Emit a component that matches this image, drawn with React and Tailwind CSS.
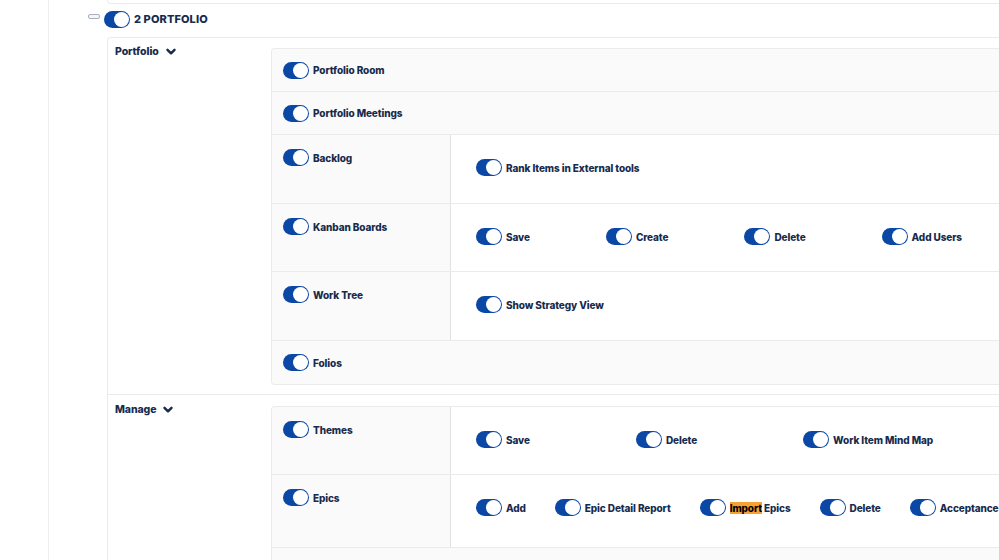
import React from "react";

function Toggle() {
  return (
    <span className="relative inline-block w-[26px] h-[17px] rounded-full bg-[#0b47a5] shrink-0">
      <span className="absolute right-[1px] top-[1px] w-[15px] h-[15px] rounded-full bg-white" />
    </span>
  );
}

function Item({ label, highlight }) {
  return (
    <div className="flex items-center gap-[4px] whitespace-nowrap shrink-0">
      <Toggle />
      <span className="text-[10px] font-[800] tracking-[-0.1px] text-[#172b4d] leading-none">
        {highlight ? (
          <>
            <span className="bg-[#f7a133] text-black">{highlight}</span>
            {label}
          </>
        ) : (
          label
        )}
      </span>
    </div>
  );
}

function SingleRow({ label, last }) {
  return (
    <div className={`h-[43px] shrink-0 bg-[#fafafa] flex items-center pl-[11px] ${last ? "" : "border-b border-[#ebebeb]"}`}>
      <Item label={label} />
    </div>
  );
}

function DoubleRow({ label, items, gap, h = "h-[69px]" }) {
  return (
    <div className={`${h} shrink-0 flex border-b border-[#ebebeb]`}>
      <div className="w-[179px] shrink-0 bg-[#fafafa] border-r border-[#e2e2e2] pl-[11px] pt-[14px]">
        <Item label={label} />
      </div>
      <div className={`flex-1 bg-white flex items-start pt-[24px] pl-[25px] ${gap} overflow-hidden`}>
        {items.map((it, i) => (
          <Item key={i} label={it.label} highlight={it.highlight} />
        ))}
      </div>
    </div>
  );
}

function Chevron() {
  return (
    <svg width="10" height="8" viewBox="0 0 10 8" className="ml-[7px]">
      <path d="M1.5 1.8 L5 5.3 L8.5 1.8" fill="none" stroke="#172b4d" strokeWidth="2.4" strokeLinecap="round" strokeLinejoin="round" />
    </svg>
  );
}

function GroupLabel({ text }) {
  return (
    <div className="w-[163px] shrink-0 pl-[7px] flex items-center h-[8px] self-start">
      <span className="text-[10.5px] font-[800] tracking-[-0.1px] text-[#172b4d]">{text}</span>
      <Chevron />
    </div>
  );
}

export default function App() {
  return (
    <div
      className="w-[999px] h-[560px] overflow-hidden bg-white flex"
      style={{ fontFamily: "Inter, 'Noto Sans', sans-serif" }}
    >
      <div className="w-[49px] shrink-0 border-r border-[#efefef]" />
      <div className="flex-1 flex flex-col min-w-0">
        <div className="ml-[58px] h-[4px] shrink-0 border-l border-b border-[#ebebeb] rounded-bl-[4px]" />
        <div className="h-[33px] shrink-0 flex items-center pl-[39px] pb-[3px]">
          <span className="w-[12px] h-[5px] rounded-[2px] border border-[#a9b0bb] bg-[#f4f5f7] mr-[4px] -mt-[5px]" />
          <Toggle />
          <span className="ml-[4px] text-[11px] font-[800] text-[#172b4d] tracking-[0.1px]">2 PORTFOLIO</span>
        </div>
        <div className="ml-[58px] shrink-0 border-l border-t border-[#ebebeb] rounded-tl-[4px] flex flex-col">
          <div className="flex shrink-0 border-b border-[#ebebeb] pt-[10px] pb-[9px]">
            <GroupLabel text="Portfolio" />
            <div className="flex-1 border-l border-t border-b border-[#ebebeb] rounded-l-[4px] overflow-hidden">
              <SingleRow label="Portfolio Room" />
              <SingleRow label="Portfolio Meetings" />
              <DoubleRow label="Backlog" items={[{ label: "Rank Items in External tools" }]} gap="gap-[76px]" />
              <DoubleRow
                label="Kanban Boards"
                h="h-[68px]"
                items={[{ label: "Save" }, { label: "Create" }, { label: "Delete" }, { label: "Add Users" }]}
                gap="gap-[76px]"
              />
              <DoubleRow label="Work Tree" items={[{ label: "Show Strategy View" }]} gap="gap-[76px]" />
              <SingleRow label="Folios" last />
            </div>
          </div>
          <div className="flex shrink-0 pt-[11px]">
            <GroupLabel text="Manage" />
            <div className="flex-1 border-l border-t border-[#ebebeb] rounded-tl-[4px] overflow-hidden">
              <DoubleRow
                label="Themes"
                h="h-[68px]"
                items={[{ label: "Save" }, { label: "Delete" }, { label: "Work Item Mind Map" }]}
                gap="gap-[106px]"
              />
              <DoubleRow
                label="Epics"
                h="h-[73px]"
                items={[
                  { label: "Add" },
                  { label: "Epic Detail Report" },
                  { label: " Epics", highlight: "Import" },
                  { label: "Delete" },
                  { label: "Acceptance" },
                ]}
                gap="gap-[29px]"
              />
              <div className="h-[43px] shrink-0 bg-[#fafafa]" />
            </div>
          </div>
        </div>
      </div>
    </div>
  );
}
